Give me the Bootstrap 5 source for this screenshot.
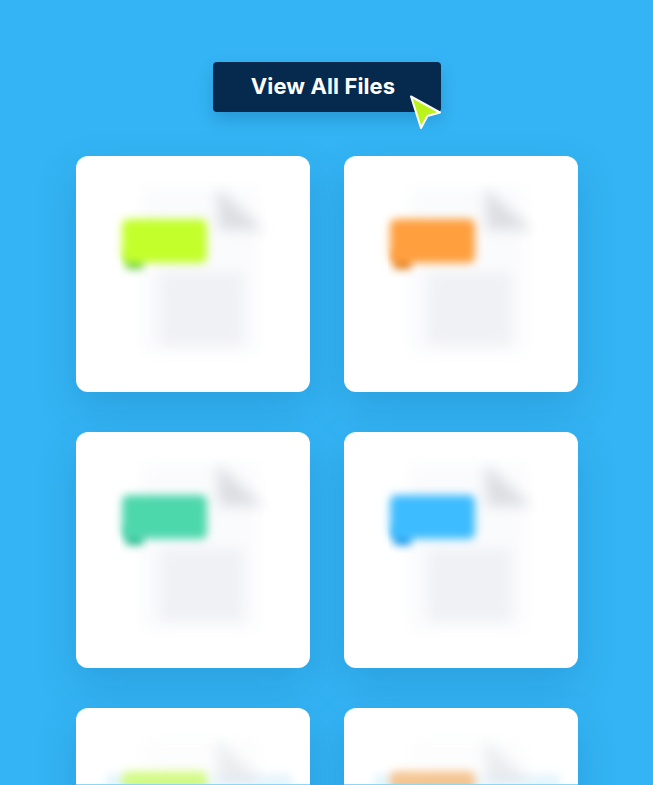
<!doctype html>
<html lang="en"><head><meta charset="utf-8">
<title>View All Files</title>
<link href="https://cdn.jsdelivr.net/npm/bootstrap@5.3.0/dist/css/bootstrap.min.css" rel="stylesheet">
<style>
html,body{height:100%;}
body{background:#34b4f4;overflow:hidden;font-family:"Inter","Liberation Sans",sans-serif;}
.stage{width:653px;height:785px;overflow:hidden;padding-top:62px;position:relative;}
.cta-wrap{position:relative;width:228px;margin-left:213px;margin-bottom:44px;}
.cta{display:block;width:100%;height:50px;background:#052a4e;color:#fff;border:0;border-radius:4px;font-weight:700;font-size:22px;line-height:48px;padding:0 8px 2px 0;text-align:center;letter-spacing:.1px;box-shadow:0 8px 16px rgba(4,60,110,.22);}
.cta:hover,.cta:active{background:#052a4e!important;color:#fff!important;}
.pointer{position:absolute;left:195px;top:31px;width:36px;height:40px;}
.file-grid{display:grid;grid-template-columns:234px 234px;column-gap:34px;row-gap:40px;margin-left:76px;}
.file-tile{height:236px;background:#fff;border-radius:12px;box-shadow:0 16px 40px rgba(10,80,140,.2);overflow:hidden;}
.file-tile svg{display:block;}
.faded-art{opacity:.55;}
</style></head>
<body>
<svg width="0" height="0" class="position-absolute"><defs>
<filter id="b10" x="-40%" y="-40%" width="180%" height="180%"><feGaussianBlur stdDeviation="9"/></filter>
<filter id="b6" x="-40%" y="-40%" width="180%" height="180%"><feGaussianBlur stdDeviation="6.500"/></filter>
<filter id="b3" x="-30%" y="-50%" width="160%" height="200%"><feGaussianBlur stdDeviation="4"/></filter>
<g id="docbase">
<rect x="66" y="32" width="116" height="166" fill="#fafbfd" filter="url(#b10)"/>
<path d="M141 32L188 74H143Z" fill="#dcdee2" filter="url(#b6)"/>
<rect x="84" y="117" width="83" height="72" fill="#f0f1f4" filter="url(#b6)"/>
</g>
</defs></svg>
<main class="stage">
<div class="cta-wrap">
<button class="btn cta" type="button">View All Files</button>
<svg class="pointer" viewBox="0 0 36 40"><path d="M3 3.500L32 19.500L19.500 23L13 35Z" fill="#bdf31c" stroke="#fff" stroke-width="2" stroke-linejoin="round"/></svg>
</div>
<div class="file-grid">
<div class="file-tile"><svg width="234" height="236"><use href="#docbase"/><rect x="50" y="96" width="17" height="17" fill="#6fd050" filter="url(#b3)"/><rect x="46" y="63" width="85" height="44" rx="6" fill="#c3ff29" filter="url(#b3)"/></svg></div>
<div class="file-tile"><svg width="234" height="236"><use href="#docbase"/><rect x="50" y="96" width="17" height="17" fill="#e07f20" filter="url(#b3)"/><rect x="46" y="63" width="85" height="44" rx="6" fill="#ff9f3c" filter="url(#b3)"/></svg></div>
<div class="file-tile"><svg width="234" height="236"><use href="#docbase"/><rect x="50" y="96" width="17" height="17" fill="#30bb90" filter="url(#b3)"/><rect x="46" y="63" width="85" height="44" rx="6" fill="#4ed8ac" filter="url(#b3)"/></svg></div>
<div class="file-tile"><svg width="234" height="236"><use href="#docbase"/><rect x="50" y="96" width="17" height="17" fill="#2298e6" filter="url(#b3)"/><rect x="46" y="63" width="85" height="44" rx="6" fill="#3cbcff" filter="url(#b3)"/></svg></div>
<div class="file-tile"><svg width="234" height="236"><rect x="30" y="66" width="186" height="30" fill="#e6f5fd" filter="url(#b3)"/><g class="faded-art"><use href="#docbase"/><rect x="46" y="63" width="85" height="44" rx="6" fill="#c3ff29" filter="url(#b3)"/></g><rect y="76" width="234" height="1" fill="#8fd6f6"/></svg></div>
<div class="file-tile"><svg width="234" height="236"><rect x="30" y="66" width="186" height="30" fill="#e6f5fd" filter="url(#b3)"/><g class="faded-art"><use href="#docbase"/><rect x="46" y="63" width="85" height="44" rx="6" fill="#ff9f3c" filter="url(#b3)"/></g><rect y="76" width="234" height="1" fill="#8fd6f6"/></svg></div>
</div>
</main>
<script src="https://cdn.jsdelivr.net/npm/bootstrap@5.3.0/dist/js/bootstrap.bundle.min.js"></script>
</body></html>
